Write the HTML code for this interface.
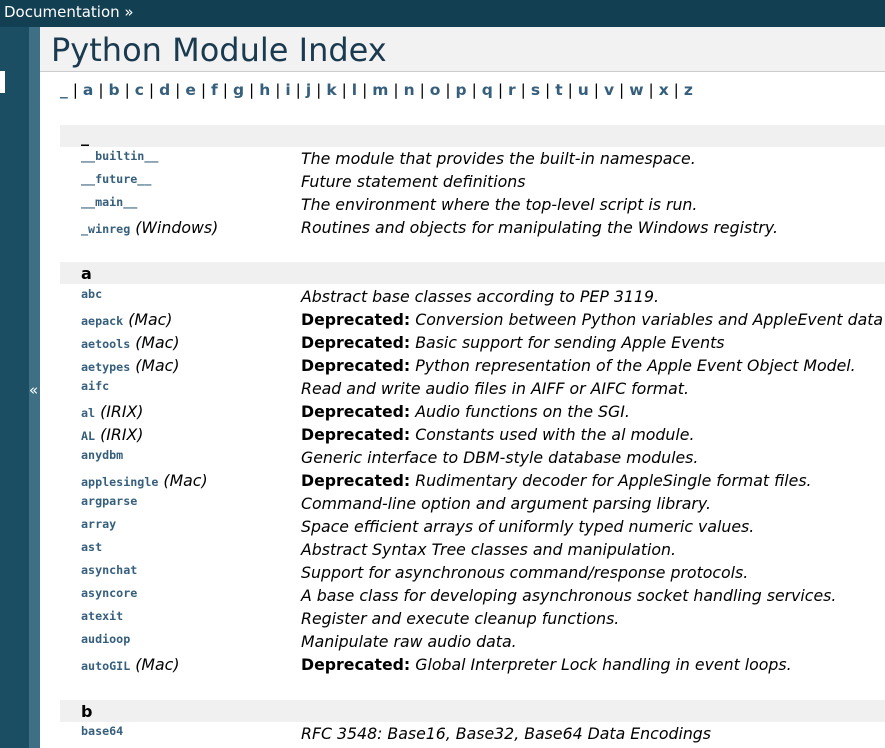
<html><head><style>
body{margin:0;width:885px;height:748px;overflow:hidden;font-family:"DejaVu Sans",sans-serif;background:#fff;position:relative}
#top{position:absolute;left:0;top:0;width:885px;height:27px;background:#133f52;color:#fff;font-size:15px;line-height:24px;padding-left:4px;box-sizing:border-box}
#sb{position:absolute;left:0;top:27px;width:29px;height:721px;background:#1c4e63}
#sb2{position:absolute;left:29px;top:27px;width:11px;height:721px;background:#3e6f84;color:#fff;font-size:15px}
#wb{position:absolute;left:0;top:71px;width:5px;height:22px;background:#fff}
#hd{position:absolute;left:40px;top:27px;width:845px;height:44px;background:#f2f2f2;border-bottom:1px solid #ccc}
#hd h1{margin:0;font-weight:normal;font-size:32px;color:#1a3a4f;position:absolute;left:11px;top:4px}
#letters{position:absolute;left:60px;top:81px;font-size:15.5px;font-weight:bold;color:#355f7c;white-space:pre;letter-spacing:-0.22px}
#letters span{color:#000;font-weight:normal}
#list{position:absolute;left:60px;top:125px;width:825px;height:623px;overflow:hidden}
.r{height:23px;line-height:23px;font-size:15.75px;white-space:nowrap;position:relative}
.n{position:absolute;left:21px;top:0}
.d{position:absolute;left:241px;top:0;font-style:italic}
tt{font-family:"DejaVu Sans Mono",monospace;font-weight:bold;font-size:11.7px;color:#355f7c;position:relative;top:-2px}
.a tt{top:0}
b{font-style:normal}
.h{height:22px;background:#f0f0f0;font-weight:bold;padding-left:21px;line-height:24px;font-size:16px}
.g1{height:23px}.g2{height:24px}
</style></head><body>
<div id="top">Documentation »</div>
<div id="sb"></div><div id="wb"></div>
<div id="sb2"><div style="position:absolute;top:354px;left:0">«</div></div>
<div id="hd"><h1>Python Module Index</h1></div>
<div id="letters">_ <span>|</span> a <span>|</span> b <span>|</span> c <span>|</span> d <span>|</span> e <span>|</span> f <span>|</span> g <span>|</span> h <span>|</span> i <span>|</span> j <span>|</span> k <span>|</span> l <span>|</span> m <span>|</span> n <span>|</span> o <span>|</span> p <span>|</span> q <span>|</span> r <span>|</span> s <span>|</span> t <span>|</span> u <span>|</span> v <span>|</span> w <span>|</span> x <span>|</span> z</div>
<div id="list">
<div class="h">_</div>
<div class="r"><span class="n"><tt>__builtin__</tt></span><span class="d">The module that provides the built-in namespace.</span></div>
<div class="r"><span class="n"><tt>__future__</tt></span><span class="d">Future statement definitions</span></div>
<div class="r"><span class="n"><tt>__main__</tt></span><span class="d">The environment where the top-level script is run.</span></div>
<div class="r a"><span class="n"><tt>_winreg</tt> <i>(Windows)</i></span><span class="d">Routines and objects for manipulating the Windows registry.</span></div>
<div class="g1"></div>
<div class="h">a</div>
<div style="height:1px"></div>
<div class="r"><span class="n"><tt>abc</tt></span><span class="d">Abstract base classes according to PEP 3119.</span></div>
<div class="r a"><span class="n"><tt>aepack</tt> <i>(Mac)</i></span><span class="d"><b>Deprecated:</b> Conversion between Python variables and AppleEvent data containers.</span></div>
<div class="r a"><span class="n"><tt>aetools</tt> <i>(Mac)</i></span><span class="d"><b>Deprecated:</b> Basic support for sending Apple Events</span></div>
<div class="r a"><span class="n"><tt>aetypes</tt> <i>(Mac)</i></span><span class="d"><b>Deprecated:</b> Python representation of the Apple Event Object Model.</span></div>
<div class="r"><span class="n"><tt>aifc</tt></span><span class="d">Read and write audio files in AIFF or AIFC format.</span></div>
<div class="r a"><span class="n"><tt>al</tt> <i>(IRIX)</i></span><span class="d"><b>Deprecated:</b> Audio functions on the SGI.</span></div>
<div class="r a"><span class="n"><tt>AL</tt> <i>(IRIX)</i></span><span class="d"><b>Deprecated:</b> Constants used with the al module.</span></div>
<div class="r"><span class="n"><tt>anydbm</tt></span><span class="d">Generic interface to DBM-style database modules.</span></div>
<div class="r a"><span class="n"><tt>applesingle</tt> <i>(Mac)</i></span><span class="d"><b>Deprecated:</b> Rudimentary decoder for AppleSingle format files.</span></div>
<div class="r"><span class="n"><tt>argparse</tt></span><span class="d">Command-line option and argument parsing library.</span></div>
<div class="r"><span class="n"><tt>array</tt></span><span class="d">Space efficient arrays of uniformly typed numeric values.</span></div>
<div class="r"><span class="n"><tt>ast</tt></span><span class="d">Abstract Syntax Tree classes and manipulation.</span></div>
<div class="r"><span class="n"><tt>asynchat</tt></span><span class="d">Support for asynchronous command/response protocols.</span></div>
<div class="r"><span class="n"><tt>asyncore</tt></span><span class="d">A base class for developing asynchronous socket handling services.</span></div>
<div class="r"><span class="n"><tt>atexit</tt></span><span class="d">Register and execute cleanup functions.</span></div>
<div class="r"><span class="n"><tt>audioop</tt></span><span class="d">Manipulate raw audio data.</span></div>
<div class="r a"><span class="n"><tt>autoGIL</tt> <i>(Mac)</i></span><span class="d"><b>Deprecated:</b> Global Interpreter Lock handling in event loops.</span></div>
<div class="g2"></div>
<div class="h">b</div>
<div class="r"><span class="n"><tt>base64</tt></span><span class="d">RFC 3548: Base16, Base32, Base64 Data Encodings</span></div>
</div>
</body></html>
